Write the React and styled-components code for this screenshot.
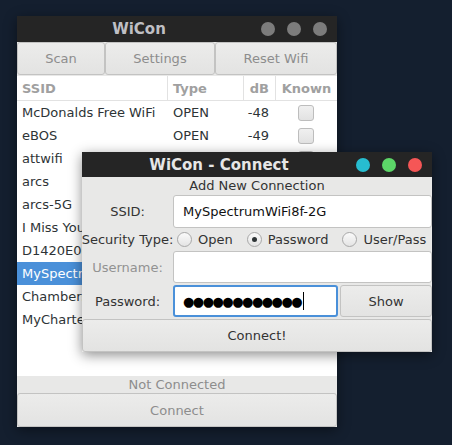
import React, { Component } from "react";
import styled, { createGlobalStyle } from "styled-components";

const GlobalStyle = createGlobalStyle`
  html, body {
    margin: 0;
    padding: 0;
    background: #141f2f;
    font-family: "DejaVu Sans", "Noto Sans", sans-serif;
    font-size: 13px;
  }
`;

const Desktop = styled.div`
  position: relative;
  width: 452px;
  height: 445px;
  overflow: hidden;
  background: #141f2f;
`;

const Window = styled.div`
  position: absolute;
  left: ${(p) => p.x}px;
  top: ${(p) => p.y}px;
  width: ${(p) => p.w}px;
  height: ${(p) => p.h}px;
  display: flex;
  flex-direction: column;
  background: #e8e8e7;
  box-shadow: 0 3px 12px rgba(0, 0, 0, 0.45);
`;

const TitleBar = styled.div`
  height: ${(p) => p.h}px;
  flex: none;
  display: flex;
  align-items: center;
  background: #252525;
  padding-right: 10px;
`;

const Title = styled.div`
  flex: 1;
  text-align: center;
  font-weight: bold;
  font-size: 15px;
  color: ${(p) => (p.active ? "#e6e6e6" : "#bfbfc4")};
`;

const Dots = styled.div`
  display: flex;
  gap: 12px;
`;

const Dot = styled.span`
  width: 14px;
  height: 14px;
  border-radius: 50%;
  background: ${(p) => p.color};
`;

const Toolbar = styled.div`
  height: 34px;
  flex: none;
  display: grid;
  grid-template-columns: 88px 110px 122px;
`;

const Button = styled.button`
  font-family: inherit;
  font-size: 13px;
  color: ${(p) => (p.dim ? "#8d8d8d" : "#333")};
  background: linear-gradient(#ececeb, #e3e3e2);
  border: 1px solid #c3c3c2;
  border-radius: 3px;
  margin: 0;
  padding: 0;
  flex: none;
  height: ${(p) => p.h || 33}px;
  grid-column: ${(p) => (p.wide ? "1 / -1" : "auto")};
`;

const List = styled.div`
  flex: 1;
  background: #fff;
  display: flex;
  flex-direction: column;
`;

const Row = styled.div`
  display: grid;
  grid-template-columns: 150px 76px 32px 62px;
  height: ${(p) => (p.head ? 25 : 23)}px;
  align-items: center;
  background: ${(p) => (p.selected ? "#4a90d9" : "transparent")};
  color: ${(p) => (p.selected ? "#fff" : "#2e3436")};
  border-bottom: ${(p) => (p.head ? "1px solid #e2e2e2" : "none")};
  box-sizing: border-box;
`;

const Cell = styled.div`
  height: 100%;
  display: flex;
  align-items: center;
  justify-content: ${(p) => p.align || "flex-start"};
  padding: 0 ${(p) => p.pr || 0}px 0 ${(p) => p.pl || 0}px;
  white-space: nowrap;
  overflow: hidden;
  border-left: ${(p) => (p.sep ? "1px solid #e2e2e2" : "none")};
  font-weight: ${(p) => (p.head ? "bold" : "normal")};
  color: ${(p) => (p.head ? "#a0a0a0" : "inherit")};
`;

const Check = styled.span`
  width: 14px;
  height: 14px;
  border: 1px solid #bdbdbd;
  border-radius: 3px;
  background: linear-gradient(#f0f0f0, #e2e2e2);
`;

const Status = styled.div`
  height: 17px;
  flex: none;
  text-align: center;
  color: #8d8d8d;
  line-height: 17px;
`;

const Body = styled.div`
  flex: 1;
  display: grid;
  grid-template-columns: 91px 167px 92px;
  grid-template-rows: 18px 33px 23px 34px 34px 33px;
  color: #333;
`;

const Heading = styled.div`
  grid-column: 1 / -1;
  text-align: center;
  line-height: 17px;
`;

const Label = styled.div`
  display: flex;
  align-items: center;
  justify-content: center;
  height: ${(p) => p.h || 33}px;
  white-space: nowrap;
  color: ${(p) => (p.dim ? "#929292" : "#333")};
`;

const Input = styled.div`
  grid-column: ${(p) => p.span || "auto"};
  align-self: start;
  box-sizing: border-box;
  height: ${(p) => p.h || 33}px;
  min-width: 0;
  overflow: hidden;
  white-space: nowrap;
  display: flex;
  align-items: center;
  padding-left: ${(p) => (p.focus ? 8 : 9)}px;
  margin-right: ${(p) => (p.focus ? 2 : 0)}px;
  background: #fff;
  border: ${(p) => (p.focus ? "2px solid #4a90d9" : "1px solid #c3c3c2")};
  border-radius: 3px;
  font-size: 13px;
  color: #111;
`;

const Secret = styled.span`
  font-size: 13px;
  letter-spacing: -1.5px;
  color: #000;
`;

const Caret = styled.span`
  display: inline-block;
  width: 1px;
  height: 18px;
  background: #000;
  margin-left: 2px;
`;

const Radios = styled.div`
  grid-column: 2 / -1;
  display: flex;
  align-items: center;
  gap: 14px;
  padding-left: 4px;
  white-space: nowrap;
`;

const RadioItem = styled.label`
  display: flex;
  align-items: center;
  gap: 6px;
`;

const RadioDot = styled.span`
  width: 13px;
  height: 13px;
  border: 1px solid #a8a8a8;
  border-radius: 50%;
  background: linear-gradient(#fafafa, #e4e4e4);
  display: flex;
  align-items: center;
  justify-content: center;
  &::after {
    content: "";
    width: 5px;
    height: 5px;
    border-radius: 50%;
    background: ${(p) => (p.on ? "#2e3436" : "transparent")};
  }
`;

const networks = [
  { ssid: "McDonalds Free WiFi", type: "OPEN", db: "-48" },
  { ssid: "eBOS", type: "OPEN", db: "-49" },
  { ssid: "attwifi", type: "OPEN", db: "-50" },
  { ssid: "arcs", type: "WPA2", db: "-55" },
  { ssid: "arcs-5G", type: "WPA2", db: "-60" },
  { ssid: "I Miss You", type: "WPA2", db: "-62" },
  { ssid: "D1420E00", type: "WPA2", db: "-65" },
  { ssid: "MySpectrumWiFi8f-2G", type: "WPA2", db: "-70", selected: true },
  { ssid: "Chambers", type: "WPA2", db: "-72" },
  { ssid: "MyCharter", type: "WPA2", db: "-75" },
];

class App extends Component {
  render() {
    return (
      <Desktop>
        <GlobalStyle />
        <Window x={17} y={16} w={320} h={411}>
          <TitleBar h={26}>
            <Title>WiCon</Title>
            <Dots>
              <Dot color="#7c7c7c" />
              <Dot color="#7c7c7c" />
              <Dot color="#7c7c7c" />
            </Dots>
          </TitleBar>
          <Toolbar>
            <Button dim>Scan</Button>
            <Button dim>Settings</Button>
            <Button dim>Reset Wifi</Button>
          </Toolbar>
          <List>
            <Row head>
              <Cell head pl={5}>SSID</Cell>
              <Cell head sep pl={5}>Type</Cell>
              <Cell head sep align="flex-end" pr={6}>dB</Cell>
              <Cell head sep align="center">Known</Cell>
            </Row>
            {networks.map((n) => (
              <Row key={n.ssid} selected={n.selected}>
                <Cell pl={5}>{n.ssid}</Cell>
                <Cell pl={6}>{n.type}</Cell>
                <Cell align="flex-end" pr={6}>{n.db}</Cell>
                <Cell align="center"><Check /></Cell>
              </Row>
            ))}
          </List>
          <Status>Not Connected</Status>
          <Button dim h={34}>Connect</Button>
        </Window>

        <Window x={82} y={152} w={350} h={200}>
          <TitleBar h={25}>
            <Title active>WiCon - Connect</Title>
            <Dots>
              <Dot color="#27bdd0" />
              <Dot color="#5cd668" />
              <Dot color="#f55656" />
            </Dots>
          </TitleBar>
          <Body>
            <Heading>Add New Connection</Heading>
            <Label>SSID:</Label>
            <Input span="2 / -1">MySpectrumWiFi8f-2G</Input>
            <Label h={23}>Security Type:</Label>
            <Radios>
              <RadioItem><RadioDot />Open</RadioItem>
              <RadioItem><RadioDot on />Password</RadioItem>
              <RadioItem><RadioDot />User/Pass</RadioItem>
            </Radios>
            <Label dim h={32}>Username:</Label>
            <Input span="2 / -1" h={32} />
            <Label h={32}>Password:</Label>
            <Input focus h={32}>
              <Secret>●●●●●●●●●●●●</Secret>
              <Caret />
            </Input>
            <Button h={32}>Show</Button>
            <Button wide h={33}>Connect!</Button>
          </Body>
        </Window>
      </Desktop>
    );
  }
}

export default App;
